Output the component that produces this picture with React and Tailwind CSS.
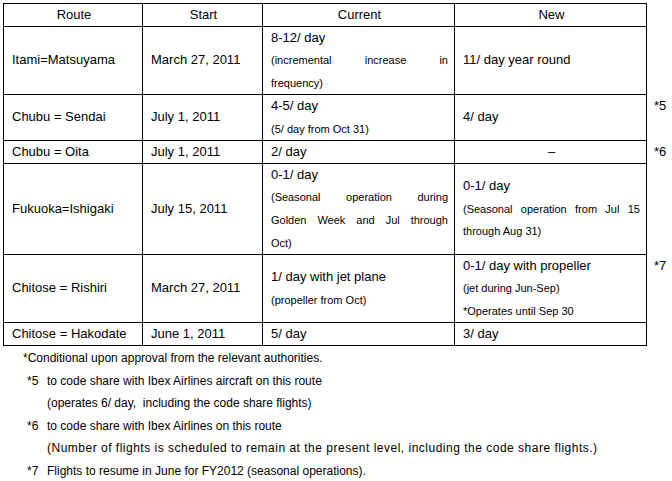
const rows = [
  { h: "h-[68px]", note: "" },
  { h: "h-[46px]", note: "*5" },
  { h: "h-[23px]", note: "*6" },
  { h: "h-[91px]", note: "" },
  { h: "h-[68px]", note: "*7" },
  { h: "h-[23px]", note: "" },
];

function Big({ children }) {
  return <div className="text-[13px] leading-[22.6px] whitespace-nowrap">{children}</div>;
}

function Small({ children }) {
  return <div className="text-[11px] leading-[22.6px] whitespace-nowrap">{children}</div>;
}

// justified line: words spread to both edges
function Just({ text }) {
  return (
    <div className="flex justify-between text-[11px] leading-[22.6px] whitespace-nowrap">
      {text.split(" ").map((w, i) => (
        <span key={i}>{w}</span>
      ))}
    </div>
  );
}

function Cell({ children, center, pr = "pr-[6px]" }) {
  return (
    <div
      className={`border-r border-b border-black flex flex-col justify-center pl-[8px] ${pr} overflow-hidden ${
        center ? "items-center pl-0 pr-0" : ""
      }`}
    >
      {children}
    </div>
  );
}

export default function App() {
  return (
    <div
      className="w-[672px] h-[481px] bg-white text-black overflow-hidden"
      style={{ fontFamily: '"Liberation Sans", Arial, sans-serif' }}
    >
      <div className="flex pt-[3px] pl-[3px]">
        {/* table */}
        <div className="grid grid-cols-[139px_120px_192px_192px] grid-rows-[23px_68px_46px_23px_91px_68px_23px] border-l border-t border-black">
          <Cell center><Big>Route</Big></Cell>
          <Cell center><Big>Start</Big></Cell>
          <Cell center><Big>Current</Big></Cell>
          <Cell center><Big>New</Big></Cell>

          <Cell><Big>Itami=Matsuyama</Big></Cell>
          <Cell><Big>March 27, 2011</Big></Cell>
          <Cell>
            <Big>8-12/ day</Big>
            <Just text="(incremental increase in" />
            <Small>frequency)</Small>
          </Cell>
          <Cell><Big>11/ day year round</Big></Cell>

          <Cell><Big>Chubu = Sendai</Big></Cell>
          <Cell><Big>July 1, 2011</Big></Cell>
          <Cell>
            <Big>4-5/ day</Big>
            <Small>(5/ day from Oct 31)</Small>
          </Cell>
          <Cell><Big>4/ day</Big></Cell>

          <Cell><Big>Chubu = Oita</Big></Cell>
          <Cell><Big>July 1, 2011</Big></Cell>
          <Cell><Big>2/ day</Big></Cell>
          <Cell center><Big>–</Big></Cell>

          <Cell><Big>Fukuoka=Ishigaki</Big></Cell>
          <Cell><Big>July 15, 2011</Big></Cell>
          <Cell>
            <Big>0-1/ day</Big>
            <Just text="(Seasonal operation during" />
            <Just text="Golden Week and Jul through" />
            <Small>Oct)</Small>
          </Cell>
          <Cell>
            <Big>0-1/ day</Big>
            <Just text="(Seasonal operation from Jul 15" />
            <Small>through Aug 31)</Small>
          </Cell>

          <Cell><Big>Chitose = Rishiri</Big></Cell>
          <Cell><Big>March 27, 2011</Big></Cell>
          <Cell>
            <Big>1/ day with jet plane</Big>
            <Small>(propeller from Oct)</Small>
          </Cell>
          <Cell>
            <Big>0-1/ day with propeller</Big>
            <Small>(jet during Jun-Sep)</Small>
            <Small>*Operates until Sep 30</Small>
          </Cell>

          <Cell><Big>Chitose = Hakodate</Big></Cell>
          <Cell><Big>June 1, 2011</Big></Cell>
          <Cell><Big>5/ day</Big></Cell>
          <Cell><Big>3/ day</Big></Cell>
        </div>

        {/* notes beside the table */}
        <div className="flex flex-col pt-[24px] pl-[7px]">
          {rows.map((r, i) => (
            <div key={i} className={`${r.h} text-[13px] leading-[22.6px]`}>
              {r.note}
            </div>
          ))}
        </div>
      </div>

      {/* footnotes */}
      <div className="mt-[1px] text-[12px] leading-[22.6px] whitespace-nowrap">
        <div className="pl-[23px]">*Conditional upon approval from the relevant authorities.</div>
        <div className="flex pl-[27px]">
          <span className="w-[20px]">*5</span>
          <span>to code share with Ibex Airlines aircraft on this route</span>
        </div>
        <div className="pl-[47px]">(operates 6/ day,&nbsp; including the code share flights)</div>
        <div className="flex pl-[27px]">
          <span className="w-[20px]">*6</span>
          <span>to code share with Ibex Airlines on this route</span>
        </div>
        <div className="pl-[47px] tracking-[0.5px]">
          (Number of flights is scheduled to remain at the present level, including the code share flights.)
        </div>
        <div className="flex pl-[27px]">
          <span className="w-[20px]">*7</span>
          <span>Flights to resume in June for FY2012 (seasonal operations).</span>
        </div>
      </div>
    </div>
  );
}
